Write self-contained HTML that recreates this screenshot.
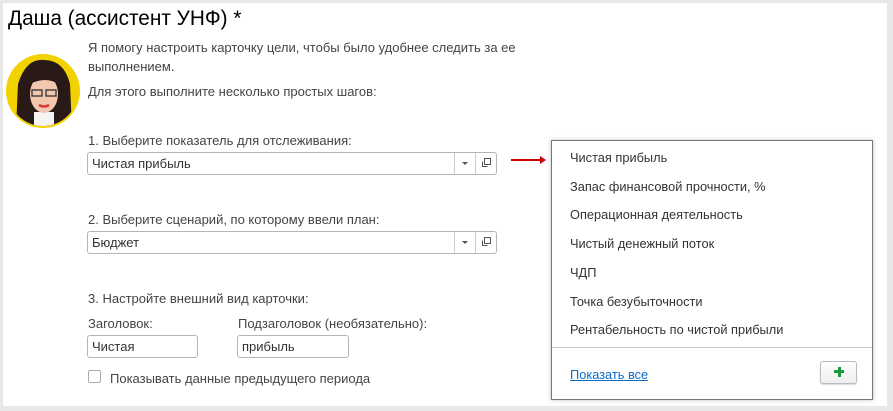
<!DOCTYPE html><html><head><meta charset="utf-8"><style>
body{margin:0;width:893px;height:411px;background:#e8e8e8;font-family:"Liberation Sans",Arial,sans-serif;position:relative;overflow:hidden}
.w{position:absolute;left:3px;top:3px;width:884px;height:403px;background:#fff}
.t{position:absolute;font-size:13px;color:#444;white-space:nowrap;line-height:15px}
.in{position:absolute;height:23px;border:1px solid #b5b5b5;border-radius:3px;background:#fff;box-sizing:border-box;font-size:13px;color:#333;padding-left:4px;line-height:21px}
.pi{position:absolute;left:570px;font-size:12.8px;color:#333;line-height:15px}
</style></head><body><div class="w"></div>
<div style="position:absolute;left:8px;top:7px;font-size:20.8px;color:#000">Даша (ассистент УНФ) *</div>
<svg style="position:absolute;left:6px;top:54px" width="74" height="74" viewBox="0 0 74 74"><defs><clipPath id="c"><circle cx="37" cy="37" r="35"/></clipPath></defs><circle cx="37" cy="37" r="37" fill="#f2d200"/><g clip-path="url(#c)"><rect width="74" height="74" fill="#f2d200"/><path d="M10 74 L12 30 Q20 4 38 6 Q58 6 64 30 L66 74Z" fill="#2a1a17"/><rect x="28" y="58" width="20" height="16" fill="#f4f4f4"/><ellipse cx="38" cy="40" rx="14" ry="19" fill="#f1c7ad"/><path d="M24 30 Q30 16 46 18 Q52 24 52 30 Q40 22 24 30Z" fill="#2a1a17"/><rect x="26" y="36" width="10" height="6" fill="none" stroke="#333" stroke-width="1.3"/><rect x="40" y="36" width="10" height="6" fill="none" stroke="#333" stroke-width="1.3"/><path d="M33 51 Q38 54 43 51" stroke="#d33" stroke-width="2.5" fill="none"/></g></svg>
<div class="t" style="left:88px;top:40px">Я помогу настроить карточку цели, чтобы было удобнее следить за ее</div>
<div class="t" style="left:88px;top:59px">выполнением.</div>
<div class="t" style="left:88px;top:84px">Для этого выполните несколько простых шагов:</div>
<div class="t" style="left:88px;top:133px">1. Выберите показатель для отслеживания:</div>
<div class="in" style="left:87px;top:152px;width:410px">Чистая прибыль</div>
<div style="position:absolute;left:454px;top:153px;width:1px;height:21px;background:#ccc"></div>
<div style="position:absolute;left:475px;top:153px;width:1px;height:21px;background:#ccc"></div>
<div style="position:absolute;left:462px;top:162px;border:3px solid transparent;border-top:3px solid #555;border-bottom:0"></div>
<svg style="position:absolute;left:481px;top:158px" width="10" height="10"><rect x="3.5" y="0.5" width="6" height="6" fill="none" stroke="#555"/><path d="M1.5 3.5V8.5H6.5" fill="none" stroke="#555"/></svg>
<div class="t" style="left:88px;top:212px">2. Выберите сценарий, по которому ввели план:</div>
<div class="in" style="left:87px;top:231px;width:410px">Бюджет</div>
<div style="position:absolute;left:454px;top:232px;width:1px;height:21px;background:#ccc"></div>
<div style="position:absolute;left:475px;top:232px;width:1px;height:21px;background:#ccc"></div>
<div style="position:absolute;left:462px;top:241px;border:3px solid transparent;border-top:3px solid #555;border-bottom:0"></div>
<svg style="position:absolute;left:481px;top:237px" width="10" height="10"><rect x="3.5" y="0.5" width="6" height="6" fill="none" stroke="#555"/><path d="M1.5 3.5V8.5H6.5" fill="none" stroke="#555"/></svg>
<div class="t" style="left:88px;top:291px">3. Настройте внешний вид карточки:</div>
<div class="t" style="left:88px;top:316px">Заголовок:</div>
<div class="t" style="left:238px;top:316px">Подзаголовок (необязательно):</div>
<div class="in" style="left:87px;top:335px;width:111px">Чистая</div>
<div class="in" style="left:237px;top:335px;width:112px">прибыль</div>
<div style="position:absolute;left:88px;top:370px;width:13px;height:13px;border:1px solid #aaa;border-radius:2px;box-sizing:border-box"></div>
<div class="t" style="left:110px;top:371px">Показывать данные предыдущего периода</div>
<div style="position:absolute;left:511px;top:159px;width:30px;height:2px;background:#c00"></div>
<div style="position:absolute;left:540px;top:156px;border-left:6px solid #c00;border-top:4px solid transparent;border-bottom:4px solid transparent"></div>
<div style="position:absolute;left:551px;top:140px;width:322px;height:260px;border:1px solid #777;box-sizing:border-box;background:#fff;box-shadow:0 0 4px rgba(0,0,0,.25)"></div>
<div class="pi" style="top:150px">Чистая прибыль</div>
<div class="pi" style="top:179px">Запас финансовой прочности, %</div>
<div class="pi" style="top:207px">Операционная деятельность</div>
<div class="pi" style="top:236px">Чистый денежный поток</div>
<div class="pi" style="top:265px">ЧДП</div>
<div class="pi" style="top:294px">Точка безубыточности</div>
<div class="pi" style="top:322px">Рентабельность по чистой прибыли</div>
<div style="position:absolute;left:552px;top:347px;width:320px;height:1px;background:#c8c8c8"></div>
<div class="pi" style="top:367px;color:#0b6cc4;text-decoration:underline">Показать все</div>
<div style="position:absolute;left:820px;top:361px;width:37px;height:23px;box-sizing:border-box;border:1px solid #bbb;border-radius:3px;background:linear-gradient(#fff,#eee);box-shadow:0 1px 1px rgba(0,0,0,.15)"></div>
<div style="position:absolute;left:834px;top:367px;width:10px;height:3px;margin-top:3px;background:#1a9a3a"></div>
<div style="position:absolute;left:837px;top:367px;width:3px;height:10px;margin-left:1px;background:#1a9a3a"></div>
</body></html>
